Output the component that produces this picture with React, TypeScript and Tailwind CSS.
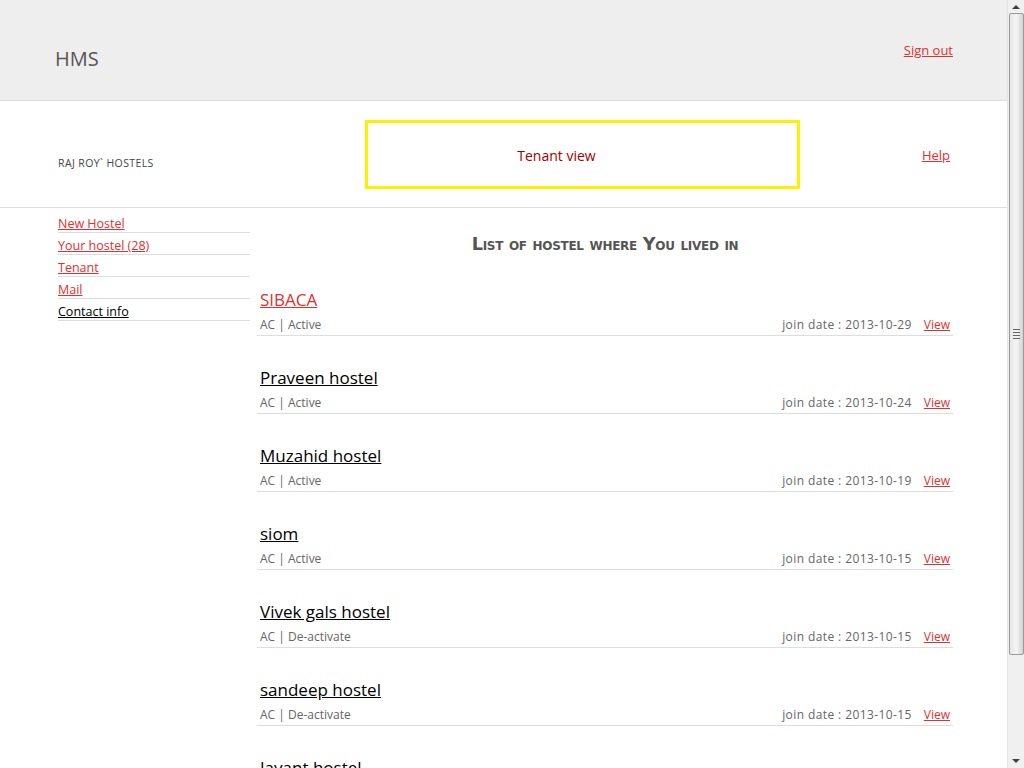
const menu = [
  { label: 'New Hostel', red: true },
  { label: 'Your hostel (28)', red: true },
  { label: 'Tenant', red: true },
  { label: 'Mail', red: true },
  { label: 'Contact info', red: false },
];

const hostels = [
  { name: 'SIBACA', status: 'Active', date: '2013-10-29', red: true },
  { name: 'Praveen hostel', status: 'Active', date: '2013-10-24' },
  { name: 'Muzahid hostel', status: 'Active', date: '2013-10-19' },
  { name: 'siom', status: 'Active', date: '2013-10-15' },
  { name: 'Vivek gals hostel', status: 'De-activate', date: '2013-10-15' },
  { name: 'sandeep hostel', status: 'De-activate', date: '2013-10-15' },
  { name: 'Jayant hostel', status: 'Active', date: '2013-10-15' },
];

function Scrollbar() {
  return (
    <div className="w-[17px] h-full bg-[#f0f0f0] flex flex-col items-center border-l border-[#e4e4e4]">
      <div className="h-[13px] w-full flex items-center justify-center">
        <div className="w-0 h-0 border-l-[4px] border-r-[4px] border-b-[4px] border-l-transparent border-r-transparent border-b-[#404040]" />
      </div>
      <div className="w-[15px] h-[642px] rounded-[2px] border border-[#9a9a9a] bg-gradient-to-r from-[#e6e6e6] via-[#f4f4f4] to-[#d2d2d2] flex flex-col items-center justify-center gap-[2px]">
        <div className="w-[7px] h-px bg-[#666]" />
        <div className="w-[7px] h-px bg-[#666]" />
        <div className="w-[7px] h-px bg-[#666]" />
        <div className="w-[7px] h-px bg-[#666]" />
      </div>
      <div className="flex-1" />
      <div className="h-[14px] w-full flex items-center justify-center">
        <div className="w-0 h-0 border-l-[4px] border-r-[4px] border-t-[4px] border-l-transparent border-r-transparent border-t-[#404040]" />
      </div>
    </div>
  );
}

export default function App() {
  return (
    <div className="flex h-screen w-full overflow-hidden bg-white font-['Open_Sans',sans-serif]">
      <div className="flex-1 flex flex-col overflow-hidden">
        {/* top bar */}
        <div className="h-[101px] shrink-0 bg-[#eeeeee] border-b border-[#dddddd] flex items-start justify-between pl-[55px] pr-[54px]">
          <div className="mt-[45px] text-[20px] leading-[28px] text-[#555]">HMS</div>
          <a href="#" className="mt-[40px] text-[13px] leading-[20px] text-[#e0302f] underline">Sign out</a>
        </div>

        {/* title band */}
        <div className="h-[107px] shrink-0 border-b border-[#dddddd] flex items-start pl-[58px] pr-[57px]">
          <div className="w-[307px] pt-[54px] text-[10.5px] leading-[16px] uppercase text-[#444] tracking-[0.4px]">Raj Roy` Hostels</div>
          <div className="mt-[19px] w-[435px] h-[69px] border-[3px] border-[#fff000] flex items-center justify-center pr-[52px] pt-[2px] text-[14px] text-[#a00000]">
            Tenant view
          </div>
          <div className="flex-1 flex justify-end pt-[44px]">
            <a href="#" className="text-[13px] leading-[20px] text-[#e0302f] underline">Help</a>
          </div>
        </div>

        {/* body */}
        <div className="flex-1 flex items-start pl-[58px] pr-[54px] overflow-hidden">
          <div className="w-[192px] shrink-0 pt-[3px]">
            {menu.map((m) => (
              <a
                key={m.label}
                href="#"
                className={`block h-[22px] border-b border-[#dddddd] text-[12.5px] leading-[26px] underline ${m.red ? 'text-[#e0302f]' : 'text-black'}`}
              >
                {m.label}
              </a>
            ))}
          </div>
          <div className="flex-1 ml-[7px]">
            <h2 className="mt-[24px] h-[26px] leading-[24px] text-center text-[17.7px] font-bold text-[#555] font-['DejaVu_Sans',sans-serif] [font-variant:small-caps] tracking-[-0.3px]">
              List of hostel where You lived in
            </h2>
            {hostels.map((h) => (
              <div key={h.name} className="pt-[30px] border-b border-[#dddddd]">
                <a
                  href="#"
                  className={`block px-[3px] text-[17px] leading-[24px] underline ${h.red ? 'text-[#e0302f]' : 'text-black'}`}
                >
                  <span>{h.name}</span>
                </a>
                <div className="mt-[3px] h-[20px] px-[3px] flex items-center justify-between text-[12px] text-[#666]">
                  <span>AC | {h.status}</span>
                  <span className="flex items-center">
                    <span className="tracking-[0.4px]">join date : {h.date}</span>
                    <a href="#" className="ml-[12px] text-[#e0302f] underline">View</a>
                  </span>
                </div>
              </div>
            ))}
          </div>
        </div>
      </div>
      <Scrollbar />
    </div>
  );
}
